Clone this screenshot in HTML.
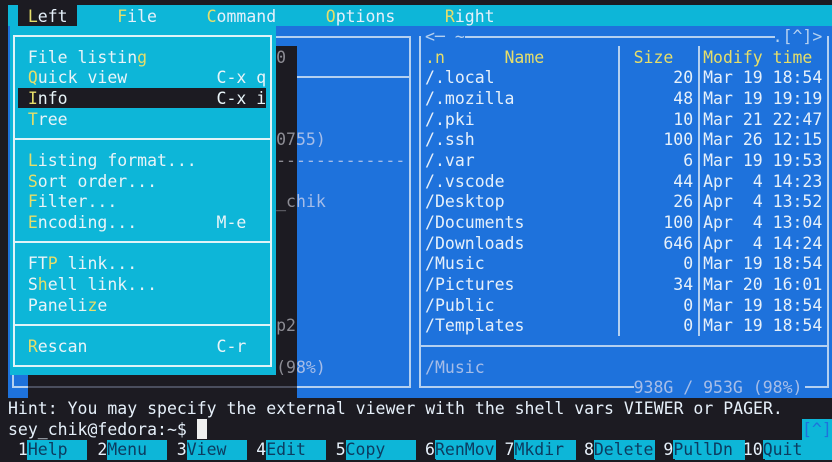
<!DOCTYPE html>
<html><head><meta charset="utf-8"><style>
html,body{margin:0;padding:0}
body{width:832px;height:462px;background:#1c1b22;position:relative;overflow:hidden;font-family:"DejaVu Sans Mono","Liberation Mono",monospace;font-size:16.5px}
.b{position:absolute}
.t{position:absolute;white-space:pre;line-height:20.7px;left:calc(8px + var(--c)*9.93px);top:calc(6.5px + var(--r)*20.65px);color:#e6f0fa}
.y{color:#e6de6a}
.w{color:#e8f4f8}
.g{color:#8c8c94}
.d{color:#a6bde8}
.fk{color:#0c3c60;background:#0db6d8}
.ln{position:absolute;background:#b4d0f0}
.lm{position:absolute;background:#e0f4f8}
</style></head><body>
<div class="b" style="left:8px;top:5px;width:824px;height:21px;background:#0db6d8"></div>
<div class="b" style="left:18px;top:5px;width:59px;height:21px;background:#1c1b22"></div>
<div class="t" style="--c:2;--r:0"><span class="y">L</span>eft</div>
<div class="t" style="--c:11;--r:0"><span class="y">F</span>ile</div>
<div class="t" style="--c:20;--r:0"><span class="y">C</span>ommand</div>
<div class="t" style="--c:32;--r:0"><span class="y">O</span>ptions</div>
<div class="t" style="--c:44;--r:0"><span class="y">R</span>ight</div>

<div class="b" style="left:8px;top:26px;width:824px;height:372px;background:#1e72dc"></div>
<div class="ln" style="left:12px;top:36px;width:399px;height:2px"></div>
<div class="ln" style="left:409px;top:36px;width:2px;height:352px"></div>
<div class="ln" style="left:12px;top:36px;width:2px;height:352px"></div>
<div class="ln" style="left:12px;top:386px;width:399px;height:2px"></div>
<div class="ln" style="left:276px;top:76px;width:134px;height:2px"></div>
<div class="t d" style="--c:27;--r:7">-------------</div>
<div class="t d" style="--c:27;--r:6">0755)</div>
<div class="t d" style="--c:27;--r:9">_chik</div>
<div class="t d" style="--c:27;--r:15">p2</div>
<div class="t d" style="--c:27;--r:17">(98%)</div>
<div class="t d" style="--c:27;--r:2">0</div>

<div class="ln" style="left:419px;top:36px;width:2px;height:352px"></div>
<div class="ln" style="left:827px;top:36px;width:2px;height:352px"></div>
<div class="ln" style="left:465px;top:36px;width:310px;height:2px"></div>
<div class="ln" style="left:419px;top:345px;width:410px;height:2px"></div>
<div class="ln" style="left:419px;top:386px;width:215px;height:2px"></div>
<div class="ln" style="left:805px;top:386px;width:24px;height:2px"></div>
<div class="ln" style="left:618px;top:46px;width:2px;height:290px"></div>
<div class="ln" style="left:698px;top:46px;width:2px;height:290px"></div>
<div class="t" style="--c:42;--r:1;color:#b4d0f0">&lt;─ ~</div>
<div class="t" style="--c:77;--r:1;color:#b4d0f0">.[^]&gt;</div>
<div class="t y" style="--c:42;--r:2">.n</div>
<div class="t y" style="--c:50;--r:2">Name</div>
<div class="t y" style="--c:63;--r:2">Size</div>
<div class="t y" style="--c:70;--r:2">Modify time</div>

<div class="t" style="--c:42;--r:3">/.local</div><div class="t" style="--c:67;--r:3">20</div><div class="t" style="--c:70;--r:3">Mar 19 18:54</div>
<div class="t" style="--c:42;--r:4">/.mozilla</div><div class="t" style="--c:67;--r:4">48</div><div class="t" style="--c:70;--r:4">Mar 19 19:19</div>
<div class="t" style="--c:42;--r:5">/.pki</div><div class="t" style="--c:67;--r:5">10</div><div class="t" style="--c:70;--r:5">Mar 21 22:47</div>
<div class="t" style="--c:42;--r:6">/.ssh</div><div class="t" style="--c:66;--r:6">100</div><div class="t" style="--c:70;--r:6">Mar 26 12:15</div>
<div class="t" style="--c:42;--r:7">/.var</div><div class="t" style="--c:68;--r:7">6</div><div class="t" style="--c:70;--r:7">Mar 19 19:53</div>
<div class="t" style="--c:42;--r:8">/.vscode</div><div class="t" style="--c:67;--r:8">44</div><div class="t" style="--c:70;--r:8">Apr  4 14:23</div>
<div class="t" style="--c:42;--r:9">/Desktop</div><div class="t" style="--c:67;--r:9">26</div><div class="t" style="--c:70;--r:9">Apr  4 13:52</div>
<div class="t" style="--c:42;--r:10">/Documents</div><div class="t" style="--c:66;--r:10">100</div><div class="t" style="--c:70;--r:10">Apr  4 13:04</div>
<div class="t" style="--c:42;--r:11">/Downloads</div><div class="t" style="--c:66;--r:11">646</div><div class="t" style="--c:70;--r:11">Apr  4 14:24</div>
<div class="t" style="--c:42;--r:12">/Music</div><div class="t" style="--c:68;--r:12">0</div><div class="t" style="--c:70;--r:12">Mar 19 18:54</div>
<div class="t" style="--c:42;--r:13">/Pictures</div><div class="t" style="--c:67;--r:13">34</div><div class="t" style="--c:70;--r:13">Mar 20 16:01</div>
<div class="t" style="--c:42;--r:14">/Public</div><div class="t" style="--c:68;--r:14">0</div><div class="t" style="--c:70;--r:14">Mar 19 18:54</div>
<div class="t" style="--c:42;--r:15">/Templates</div><div class="t" style="--c:68;--r:15">0</div><div class="t" style="--c:70;--r:15">Mar 19 18:54</div>
<div class="t d" style="--c:42;--r:17">/Music</div>
<div class="t d" style="--c:63;--r:18">938G / 953G (98%)</div>

<div class="b" style="left:276px;top:46px;width:21px;height:352px;background:#1c1b22"></div>
<div class="b" style="left:28px;top:375px;width:269px;height:23px;background:#1c1b22"></div>
<div class="b" style="left:28px;top:386px;width:269px;height:2px;background:#4a4e5e"></div>
<div class="t g" style="--c:27;--r:2">0</div>
<div class="t g" style="--c:27;--r:6">07</div>
<div class="t g" style="--c:27;--r:7">--</div>
<div class="t g" style="--c:27;--r:9">_c</div>
<div class="t g" style="--c:27;--r:15">p2</div>
<div class="t g" style="--c:27;--r:17">(9</div>

<div class="b" style="left:10px;top:26px;width:266px;height:349px;background:#0db6d8"></div>
<div class="lm" style="left:13px;top:35px;width:259px;height:2px"></div>
<div class="lm" style="left:13px;top:365px;width:259px;height:2px"></div>
<div class="lm" style="left:13px;top:35px;width:2px;height:332px"></div>
<div class="lm" style="left:270px;top:35px;width:2px;height:332px"></div>
<div class="lm" style="left:13px;top:138px;width:259px;height:2px"></div>
<div class="lm" style="left:13px;top:241px;width:259px;height:2px"></div>
<div class="lm" style="left:13px;top:324px;width:259px;height:2px"></div>
<div class="b" style="left:18px;top:88px;width:248px;height:20px;background:#1c1b22"></div>
<div class="t w" style="--c:2;--r:2">File listin<span class="y">g</span></div>
<div class="t w" style="--c:2;--r:3"><span class="y">Q</span>uick view</div><div class="t w" style="--c:21;--r:3">C-x q</div>
<div class="t w" style="--c:2;--r:4"><span class="y">I</span>nfo</div><div class="t w" style="--c:21;--r:4">C-x i</div>
<div class="t w" style="--c:2;--r:5"><span class="y">T</span>ree</div>
<div class="t w" style="--c:2;--r:7"><span class="y">L</span>isting format...</div>
<div class="t w" style="--c:2;--r:8"><span class="y">S</span>ort order...</div>
<div class="t w" style="--c:2;--r:9"><span class="y">F</span>ilter...</div>
<div class="t w" style="--c:2;--r:10"><span class="y">E</span>ncoding...</div><div class="t w" style="--c:21;--r:10">M-e</div>
<div class="t w" style="--c:2;--r:12">FT<span class="y">P</span> link...</div>
<div class="t w" style="--c:2;--r:13">S<span class="y">h</span>ell link...</div>
<div class="t w" style="--c:2;--r:14">Paneli<span class="y">z</span>e</div>
<div class="t w" style="--c:2;--r:16"><span class="y">R</span>escan</div><div class="t w" style="--c:21;--r:16">C-r</div>

<div class="t" style="--c:0;--r:19">Hint: You may specify the external viewer with the shell vars VIEWER or PAGER.</div>
<div class="t" style="--c:0;--r:20">sey_chik@fedora:~$ </div>
<div class="b" style="left:197px;top:419px;width:10px;height:20px;background:#f0f0f0"></div>
<div class="b" style="left:802px;top:419px;width:30px;height:21px;background:#0db6d8"></div>
<div class="t" style="--c:80;--r:20;color:#1e72dc;left:802px">[^]</div>

<div class="b fk" style="left:27px;top:440px;width:60px;height:20px"></div>
<div class="b fk" style="left:107px;top:440px;width:60px;height:20px"></div>
<div class="b fk" style="left:187px;top:440px;width:60px;height:20px"></div>
<div class="b fk" style="left:266px;top:440px;width:60px;height:20px"></div>
<div class="b fk" style="left:346px;top:440px;width:70px;height:20px"></div>
<div class="b fk" style="left:436px;top:440px;width:60px;height:20px"></div>
<div class="b fk" style="left:516px;top:440px;width:60px;height:20px"></div>
<div class="b fk" style="left:595px;top:440px;width:60px;height:20px"></div>
<div class="b fk" style="left:675px;top:440px;width:70px;height:20px"></div>
<div class="b fk" style="left:765px;top:440px;width:67px;height:20px"></div>
<div class="t" style="--c:1;--r:21">1<span class="fk">Help</span></div>
<div class="t" style="--c:9;--r:21">2<span class="fk">Menu</span></div>
<div class="t" style="--c:17;--r:21">3<span class="fk">View</span></div>
<div class="t" style="--c:25;--r:21">4<span class="fk">Edit</span></div>
<div class="t" style="--c:33;--r:21">5<span class="fk">Copy</span></div>
<div class="t" style="--c:42;--r:21">6<span class="fk">RenMov</span></div>
<div class="t" style="--c:50;--r:21">7<span class="fk">Mkdir</span></div>
<div class="t" style="--c:58;--r:21">8<span class="fk">Delete</span></div>
<div class="t" style="--c:66;--r:21">9<span class="fk">PullDn</span></div>
<div class="t" style="--c:74;--r:21">10<span class="fk">Quit</span></div>
</body></html>
